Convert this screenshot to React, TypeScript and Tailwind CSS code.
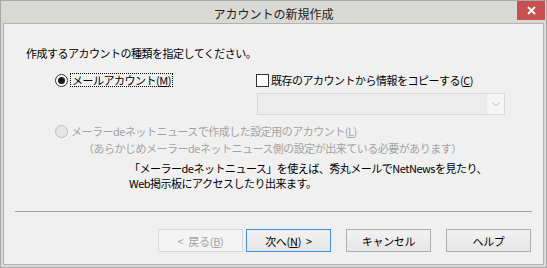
import React from "react";

function Radio({ checked, disabled }: { checked?: boolean; disabled?: boolean }) {
  return (
    <div
      className={
        "w-[13px] h-[13px] rounded-full border flex items-center justify-center shrink-0 " +
        (disabled ? "border-[#bcbcbc] bg-[#e6e6e6]" : "border-[#333333] bg-white")
      }
    >
      {checked && <div className="w-[7px] h-[7px] rounded-full bg-[#1a1a1a]" />}
    </div>
  );
}

function Btn({ children, variant }: { children: React.ReactNode; variant?: "disabled" | "default" }) {
  const cls =
    variant === "disabled"
      ? "border-[#d9d9d9] bg-[#f4f4f4] text-[#a3a3a3]"
      : variant === "default"
      ? "border-[#3c8ee6] bg-gradient-to-b from-[#f2f2f2] to-[#e6e6e6] text-black"
      : "border-[#adadad] bg-gradient-to-b from-[#f2f2f2] to-[#e6e6e6] text-black";
  return (
    <div className={"w-[85px] h-[23px] border flex items-center justify-center text-[11px] tracking-[-0.3px] " + cls}>
      {children}
    </div>
  );
}

export default function App() {
  return (
    <div className="w-[547px] h-[268px] bg-[#d8d8d5] border border-[#a9a9a9] relative flex flex-col font-['Noto_Sans_CJK_JP',sans-serif] text-black overflow-hidden">
      <div className="h-[22px] flex items-center justify-center text-[12px] text-[#1e1e1e] pt-[3px] leading-none">
        アカウントの新規作成
      </div>
      <div className="absolute top-0 right-[1px] w-[28px] h-[19px] bg-[#c75050] flex items-center justify-center">
        <svg width="9" height="9" viewBox="0 0 9 9">
          <path d="M1 1 L8 8 M8 1 L1 8" stroke="white" strokeWidth="1.8" />
        </svg>
      </div>
      <div className="mx-[2px] h-[242px] border border-[#b2b2b2] bg-[#f0f0f0] flex flex-col text-[11px] leading-[14px] tracking-[-0.5px]">
        <div className="mt-[22px] pl-[22px] h-[14px]">作成するアカウントの種類を指定してください。</div>

        <div className="mt-[13px] flex items-start">
          <div className="w-[252px] pl-[51px] flex items-center h-[14px] gap-[2px]">
            <Radio checked />
            <span className="border border-dotted border-black px-[1px] leading-[12px]">
              メールアカウント(<span className="underline">M</span>)
            </span>
          </div>
          <div className="flex flex-col">
            <div className="flex items-center h-[14px] gap-[2px]">
              <div className="w-[13px] h-[13px] border border-[#333333] bg-white shrink-0" />
              <span>
                既存のアカウントから情報をコピーする(<span className="underline">C</span>)
              </span>
            </div>
            <div className="mt-[6px] ml-[1px] w-[248px] h-[22px] border border-[#d9d9d9] bg-[#ececec] flex justify-end">
              <div className="w-[17px] h-full bg-[#f5f5f5] flex items-center justify-center">
                <svg width="8" height="5" viewBox="0 0 8 5">
                  <path d="M0.5 0.5 L4 4 L7.5 0.5" stroke="#b5b5b5" strokeWidth="1" fill="none" />
                </svg>
              </div>
            </div>
          </div>
        </div>

        <div className="mt-[9px] pl-[51px] flex items-center h-[14px] gap-[3px] text-[#a3a3a3]">
          <Radio disabled />
          <span>
            メーラーdeネットニュースで作成した設定用のアカウント(<span className="underline">L</span>)
          </span>
        </div>
        <div className="mt-[3px] pl-[79px] h-[14px] text-[#a3a3a3]">
          （あらかじめメーラーdeネットニュース側の設定が出来ている必要があります）
        </div>

        <div className="mt-[6px] pl-[125px] leading-[15px]">
          <div>「メーラーdeネットニュース」を使えば、秀丸メールでNetNewsを見たり、</div>
          <div>Web掲示板にアクセスしたり出来ます。</div>
        </div>

        <div className="mt-[20px] ml-[11px] w-[517px] h-px bg-[#a0a0a0]" />

        <div className="mt-[17px] flex justify-end pr-[12px]">
          <Btn variant="disabled">
            <span className="mr-[5px]">&lt;</span>戻る(<span className="underline">B</span>)
          </Btn>
          <div className="ml-[3px]">
            <Btn variant="default">
              次へ(<span className="underline">N</span>)<span className="ml-[5px]">&gt;</span>
            </Btn>
          </div>
          <div className="ml-[15px]">
            <Btn>キャンセル</Btn>
          </div>
          <div className="ml-[15px]">
            <Btn>ヘルプ</Btn>
          </div>
        </div>
      </div>
    </div>
  );
}
